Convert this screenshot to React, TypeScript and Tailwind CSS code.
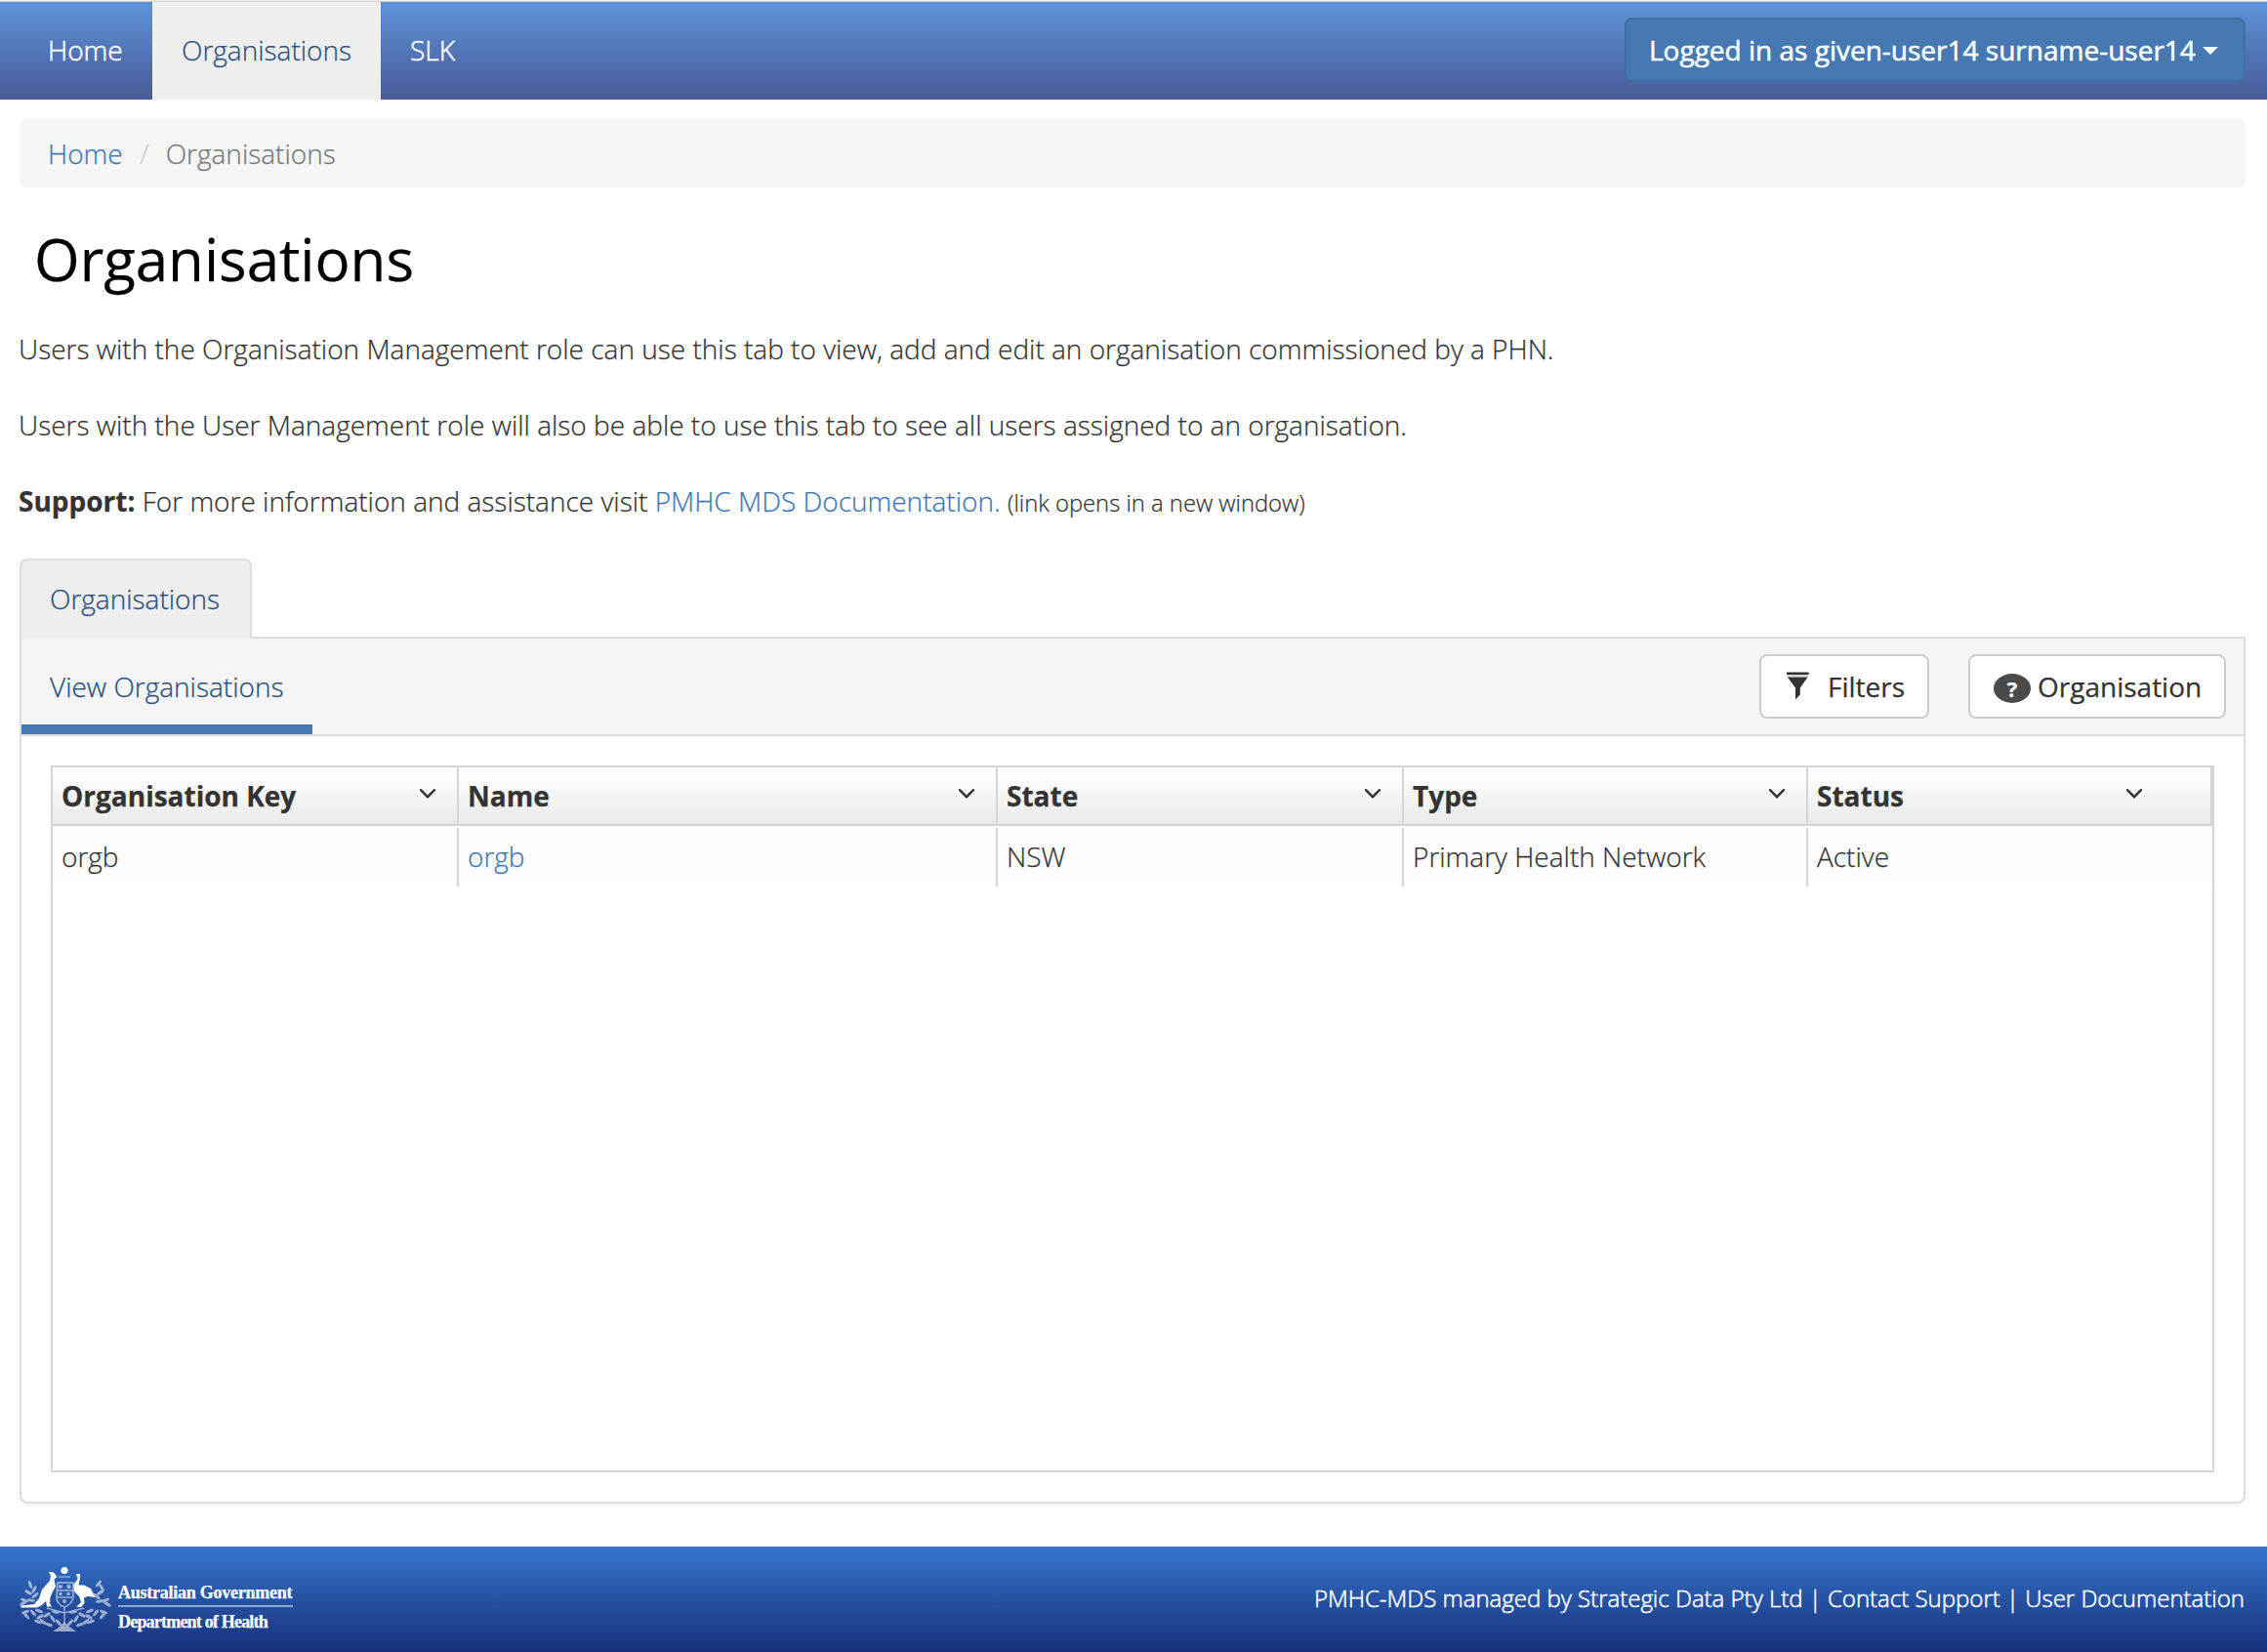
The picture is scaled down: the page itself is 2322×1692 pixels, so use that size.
import React from "react";

const columns = [
  { label: "Organisation Key", value: "orgb", width: "w-[416px]", link: false },
  { label: "Name", value: "orgb", width: "w-[552px]", link: true },
  { label: "State", value: "NSW", width: "w-[416px]", link: false },
  { label: "Type", value: "Primary Health Network", width: "w-[414px]", link: false },
  { label: "Status", value: "Active", width: "w-[416px]", link: false },
];

function Chevron() {
  return (
    <svg width="18" height="12" viewBox="0 0 18 12" fill="none">
      <path d="M2 2.2 L9 9.2 L16 2.2" stroke="#333" strokeWidth="2.4" strokeLinecap="round" strokeLinejoin="miter" />
    </svg>
  );
}

function FilterIcon() {
  return (
    <svg width="24" height="30" viewBox="0 0 24 30" fill="#333">
      <path d="M1 0.5 H23.5 V3 H1 Z" />
      <path d="M1.5 3.5 H23 V4.500 H1.500 Z" opacity="0.4" />
      <path d="M1.8 5.500 H22.7 L14.8 16.5 V23.5 L10 28.5 V16.5 Z" />
    </svg>
  );
}

function Leaf({ x, y, r }: { x: number; y: number; r: number }) {
  return <ellipse cx={x} cy={y} rx="4.2" ry="1.6" transform={`rotate(${r} ${x} ${y})`} />;
}

const leaves: [number, number, number][] = [
  [11, 19, 70], [15, 24, -60], [9, 27, 30], [16, 30, -40], [5, 35, 20], [12, 35, 10], [4, 38, -30],
  [81, 18, -50], [84, 22, 60], [83, 27, -30], [79, 31, 40], [88, 35, -20], [82, 36, -10], [90, 39, 30],
  [6, 47, -20], [7, 51, 50], [14, 48, 50], [20, 46, 20], [21, 52, -30], [19, 57, 20], [24, 57, 40], [28, 50, -30], [30, 60, 20], [34, 54, 60], [37, 47, 10], [40, 58, 50],
  [86, 47, 20], [85, 51, -50], [78, 48, -50], [72, 46, -20], [71, 52, 30], [73, 57, -20], [68, 57, -40], [64, 50, 30], [62, 60, -20], [58, 54, -60], [55, 47, -10], [52, 58, -50],
];

function CoatOfArms() {
  return (
    <svg width="94" height="68" viewBox="0 0 94 68" fill="#fff">
      <circle cx="46" cy="4.5" r="3.6" />
      <path d="M40 11 H52" stroke="#fff" strokeWidth="1.4" opacity="0.5" />
      <g opacity="0.55">
        {leaves.map(([x, y, r], i) => (
          <Leaf key={i} x={x} y={y} r={r} />
        ))}
        <path d="M39 17 H55 V32 Q54 39 46 42 Q38 39 38 32 Z" fill="none" stroke="#fff" strokeWidth="1.6" />
        <path d="M38 25 H55 M39 32 H54 M46 42 V66 M28 43 L46 48 L66 43" fill="none" stroke="#fff" strokeWidth="1.5" />
        <circle cx="42" cy="21" r="2" />
        <circle cx="50.5" cy="21" r="2.2" />
        <circle cx="42" cy="28.5" r="1.8" />
        <circle cx="50" cy="28.500" r="1.8" />
        <circle cx="46" cy="36" r="2" />
        <path d="M34 67 L41 62 L46 57 L51 62 L58 67 Z" />
      </g>
      <path d="M30 6 L35 6.500 L38.500 11 L35.500 13.500 L37 21 L34 26 L31.500 32 L31 38 L33 41.500 H28 L27 36 L23 40 L18 42.500 L1 42.500 L2 40.500 L15 39 L20 33 L23 24 L31 15 L32 10 Z" />
      <path d="M57 8.500 L62 8 L62 12 L60.500 19.500 L66 19.500 L73 23 L77.500 32 L70 31 L66 32.500 L66.500 38 L63 42 H58 L63 37 L61 31 L56 26 L55.500 19 L59.500 13 L59 10 Z" />
    </svg>
  );
}

export default function App() {
  return (
    <div className="flex h-[1692px] w-[2322px] flex-col overflow-hidden bg-white font-['Open_Sans',sans-serif] text-[28px] font-light leading-[40px] text-[#333] [-webkit-text-stroke:0.25px]">
      <div className="h-[2px] shrink-0 border-b border-[#d0d0d0] bg-[#f0f0f0]" />
      <nav className="flex h-[100px] shrink-0 items-stretch bg-linear-to-b from-[#5e92d8] to-[#485b98] pl-[20px] pr-[22px] text-white [-webkit-text-stroke:0.5px]">
        <a className="w-[136px] pl-[29px] pt-[29px]">Home</a>
        <a className="w-[234px] bg-[#eee] pl-[30px] pt-[29px] text-[#284f7d] [-webkit-text-stroke:0.25px]">Organisations</a>
        <a className="pl-[30px] pt-[29px]">SLK</a>
        <button className="ml-auto mt-[16px] flex h-[66px] w-[636px] items-center whitespace-nowrap rounded-[8px] border-2 border-[#406ea5] bg-[#4678b2] pb-[1px] pl-[23px] font-normal">
          Logged in as given-user14 surname-user14
          <span className="ml-[7px] mt-[3px] border-x-[8px] border-t-[8px] border-x-transparent border-t-white" />
        </button>
      </nav>

      <div className="ml-[20px] mt-[20px] flex h-[70px] w-[2280px] shrink-0 items-center rounded-[8px] bg-[#f5f5f5] px-[29px]">
        <a className="text-[#4078b5]">Home</a>
        <span className="w-[44px] text-center text-[#ccc]">/</span>
        <span className="text-[#777]">Organisations</span>
      </div>

      <h1 className="ml-[35px] mt-[32px] text-[60px] font-normal leading-[82px] text-black">Organisations</h1>

      <div className="ml-[19px] mt-[31px] flex flex-col gap-[38px] whitespace-nowrap">
        <p>Users with the Organisation Management role can use this tab to view, add and edit an organisation commissioned by a PHN.</p>
        <p>Users with the User Management role will also be able to use this tab to see all users assigned to an organisation.</p>
        <p className="h-[40px]">
          <b className="font-bold">Support:</b> For more information and assistance visit <a className="text-[#4078b5]">PMHC MDS Documentation.</a>{" "}
          <span className="text-[23.8px]">(link opens in a new window)</span>
        </p>
      </div>

      <div className="ml-[20px] mt-[39px] flex w-[2280px] shrink-0 flex-col">
        <div className="z-10 -mb-[2px] flex h-[82px] w-[238px] rounded-t-[8px] border-2 border-b-0 border-[#ddd] bg-[#eee] pl-[29px] pt-[19px] text-[#284f7d]">Organisations</div>
        <div className="flex h-[888px] flex-col rounded-b-[8px] border-2 border-[#ddd] shadow-[0_2px_4px_rgba(0,0,0,0.06)]">
          <div className="flex h-[100px] shrink-0 items-start border-b-2 border-[#ddd] bg-[#f5f5f5] pr-[18px]">
            <div className="h-[98px] w-[298px] whitespace-nowrap border-b-[10px] border-[#4678b2] pl-[29px] pt-[29px] text-[#284f7d]">View Organisations</div>
            <button className="ml-auto mt-[16px] flex h-[66px] w-[174px] items-center rounded-[8px] border-2 border-[#ccc] bg-white pl-[25px] font-normal">
              <FilterIcon />
              <span className="ml-[19px]">Filters</span>
            </button>
            <button className="ml-[40px] mt-[16px] flex h-[66px] w-[264px] items-center rounded-[8px] border-2 border-[#ccc] bg-white pl-[24px] font-normal">
              <span className="mt-[4px] flex h-[30px] w-[38px] items-center justify-center rounded-[50%] bg-[#4a4a4a] text-[22px] font-bold leading-[30px] text-white">?</span>
              <span className="ml-[7px]">Organisation</span>
            </button>
          </div>
          <div className="ml-[30px] mt-[30px] flex h-[724px] w-[2216px] flex-col border-2 border-[#d4d4d4]">
            <div className="flex h-[60px] shrink-0 border-b-2 border-r-2 border-[#d4d4d4] bg-linear-to-b from-white to-[#eaeaea] font-bold">
              {columns.map((c, i) => (
                <div key={c.label} className={`flex shrink-0 justify-between pl-[9px] ${i === 4 ? "w-[412px] pr-[69px]" : `${c.width} border-r-2 border-[#d4d4d4] pr-[21px]`}`}>
                  <span className="pt-[9px]">{c.label}</span>
                  <span className="pt-[21px]"><Chevron /></span>
                </div>
              ))}
            </div>
            <div className="flex h-[62px] bg-[#fdfdfd] pt-[2px]">
              {columns.map((c, i) => (
                <div key={c.label} className={`pl-[9px] pt-[9px] ${i === 4 ? "w-[412px]" : `${c.width} border-r-2 border-[#d4d4d4]`} ${c.link ? "text-[#4078b5]" : ""}`}>{c.value}</div>
              ))}
            </div>
          </div>
        </div>
      </div>

      <footer className="mt-auto flex h-[108px] shrink-0 items-center justify-between bg-linear-to-b from-[#3676cc] to-[#18307c] pl-[20px] pr-[23px] text-white">
        <div className="flex items-center">
          <CoatOfArms />
          <div className="ml-[7px] mt-[14px] w-[179px] whitespace-nowrap font-['Liberation_Serif',serif] text-[18px] font-bold leading-[24px]">
            <div className="h-[28px] border-b-2 border-white/50 pt-[1px] tracking-[-0.25px]">Australian Government</div>
            <div className="pt-[3px] tracking-[-0.8px]">Department of Health</div>
          </div>
        </div>
        <div className="-mt-[2px] whitespace-nowrap text-[24px] [-webkit-text-stroke:0.5px]">PMHC-MDS managed by Strategic Data Pty Ltd | Contact Support | User Documentation</div>
      </footer>
    </div>
  );
}
